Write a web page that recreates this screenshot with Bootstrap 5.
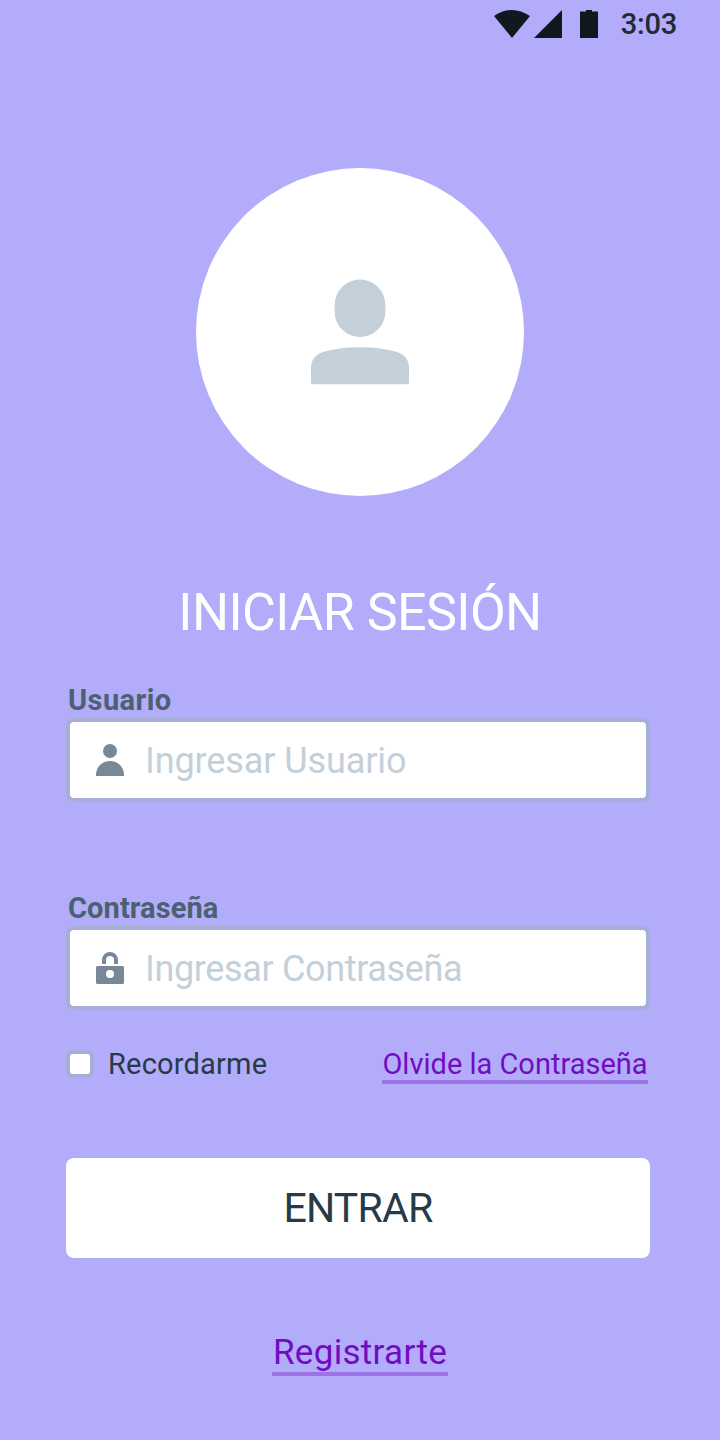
<!DOCTYPE html>
<html lang="es">
<head>
<meta charset="utf-8">
<meta name="viewport" content="width=device-width, initial-scale=1">
<title>Iniciar sesión</title>
<link href="https://cdn.jsdelivr.net/npm/bootstrap@5.3.0/dist/css/bootstrap.min.css" rel="stylesheet">
<style>
body{background:#b2acfa;font-family:Roboto,"Liberation Sans",sans-serif;color:#263a48;width:720px;height:1440px;overflow:hidden}
svg{display:block}
.statusbar{height:48px;padding-right:43px;color:#212b36}
.clock{font-size:29px;font-weight:500;line-height:48px;letter-spacing:-.2px;margin-left:23px}
.avatar{width:328px;height:328px;margin-top:120px}
.title{font-size:52px;font-weight:400;line-height:80px;margin-top:77px;letter-spacing:-.55px}
.login{width:584px;margin:29px 0 0 66px}
.field-label{font-size:29px;font-weight:700;line-height:36px;color:#4b6170;padding-left:2px;letter-spacing:.45px}
.second{margin-top:88px;letter-spacing:.1px}
.field{height:84px;border:4px solid #a5aed5;border-radius:8px;padding-left:26px}
.field .form-control{font-size:36px;line-height:76px;height:76px;padding:1px 0 0 21px;letter-spacing:-.1px}
.field #pass{letter-spacing:-.35px}
.form-control::placeholder{color:#c3cfd9}
.options{margin-top:34px;height:40px;font-size:29px;line-height:40px;padding-right:2px}
.options .form-check-input{width:28px;height:28px;border:4px solid #a5aed5;border-radius:7px;margin:0 14px 0 0}
.remember{letter-spacing:.2px}
.plain-link{color:#720cc1;box-shadow:inset 0 -4px #9d74e5;text-decoration:none;white-space:nowrap}
.forgot{width:266px}
.enter{height:100px;margin-top:74px;font-size:41px;line-height:100px;border-radius:8px;padding:0;color:#263a48;letter-spacing:-.75px}
.register{height:48px;font-size:35px;line-height:50px;margin-top:70px;width:176px;letter-spacing:.3px}
</style>
</head>
<body>
<header class="statusbar d-flex justify-content-end align-items-center">
<svg width="104" height="48" viewBox="494 0 104 48" fill="#101820"><path d="M494 16Q512 4 530 16L512 38ZM562 10V38H534ZM580 11.500H586V10H592V11.500H598V38H580Z"/></svg>
<span class="clock text-nowrap">3:03</span>
</header>
<main>
<div class="avatar rounded-circle bg-white mx-auto d-flex justify-content-center">
<svg width="328" height="328" viewBox="196 168 328 328" fill="#c3cfd9"><rect x="334.700" y="279.500" width="50.600" height="57.500" rx="25.300"/><path d="M311 368C311 360 315 355 323 352Q338 347.200 360 347.200T397 352C405 355 409 360 409 368V382.500Q409 384.300 407.200 384.300H312.800Q311 384.300 311 382.500Z"/></svg>
</div>
<h1 class="title text-center text-white mb-0">INICIAR SESIÓN</h1>
<form class="login">
<label class="field-label d-block" for="user">Usuario</label>
<div class="field bg-white d-flex align-items-center">
<svg class="flex-shrink-0" width="28" height="32" viewBox="0 0 28 32" fill="#788896"><circle cx="14" cy="7" r="7"/><path d="M0 32V31C0 23 6 17 14 17S28 23 28 31V32Z"/></svg>
<input id="user" class="form-control border-0 bg-transparent shadow-none" type="text" placeholder="Ingresar Usuario">
</div>
<label class="field-label d-block second" for="pass">Contraseña</label>
<div class="field bg-white d-flex align-items-center">
<svg class="flex-shrink-0" width="28" height="32" viewBox="0 0 28 32" fill="#788896"><path fill-rule="evenodd" d="M6 12V8A8 8 0 0 1 22 8V12H18V8A4 4 0 0 0 10 8V12ZM1.500 14H26.500Q28 14 28 15.500V30.500Q28 32 26.500 32H1.500Q0 32 0 30.500V15.500Q0 14 1.500 14ZM14 18A4 4 0 1 0 14 26A4 4 0 1 0 14 18Z"/></svg>
<input id="pass" class="form-control border-0 bg-transparent shadow-none" type="password" placeholder="Ingresar Contraseña">
</div>
<div class="options d-flex justify-content-between">
<label class="d-flex align-items-center remember"><input class="form-check-input flex-shrink-0" type="checkbox">Recordarme</label>
<a class="plain-link forgot text-center" href="#">Olvide la Contraseña</a>
</div>
<button class="enter btn btn-light bg-white border-0 w-100 d-block" type="button">ENTRAR</button>
</form>
<a class="plain-link register d-block mx-auto text-center" href="#">Registrarte</a>
</main>
<script src="https://cdn.jsdelivr.net/npm/bootstrap@5.3.0/dist/js/bootstrap.bundle.min.js"></script>
</body>
</html>
